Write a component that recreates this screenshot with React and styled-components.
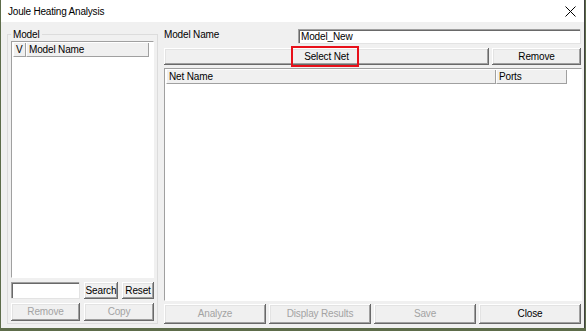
import React from "react";
import styled, { createGlobalStyle } from "styled-components";

const Global = createGlobalStyle`
	html, body {
		margin: 0;
		padding: 0;
		background: #5d6c4a;
		width: 586px;
		height: 331px;
		overflow: hidden;
	}
	* {
		box-sizing: border-box;
	}
`;

const Window = styled.div`
	width: 584px;
	height: 328px;
	margin-left: 1px;
	background: #f0f0f0;
	border-right: 1px solid #3f3f3f;
	display: flex;
	flex-direction: column;
	font-family: "Liberation Sans", Arial, sans-serif;
	font-size: 10px;
	letter-spacing: -0.15px;
	color: #000;
`;

const TitleBar = styled.div`
	height: 22px;
	background: #fff;
	display: flex;
	align-items: center;
	justify-content: space-between;
	padding: 0 8px 0 7px;
	font-size: 10px;
	letter-spacing: -0.2px;
`;

const Body = styled.div`
	flex: 1;
	display: flex;
	gap: 6px;
	padding: 6px 3px 4px 6px;
`;

const Group = styled.fieldset`
	width: 151px;
	margin: 0;
	padding: 0 3px 2px 3px;
	border: 1px solid #dcdcdc;
	display: flex;
	flex-direction: column;
	min-width: 0;
	legend {
		padding: 0 2px;
		margin-left: 0;
		line-height: 13px;
	}
`;

const List = styled.div`
	flex: 1;
	background: #fff;
	border-top: 1px solid #a0a0a0;
	border-left: 1px solid #a0a0a0;
	border-right: 1px solid #fff;
	border-bottom: 1px solid #fff;
	padding: 1px 0 0 1px;
	display: flex;
	flex-direction: column;
`;

const Header = styled.div`
	display: flex;
	height: 14px;
`;

const Col = styled.div`
	width: ${(p) => p.$w}px;
	background: #f0f0f0;
	border-right: 1px solid #a0a0a0;
	border-bottom: 1px solid #a0a0a0;
	border-left: 1px solid #fff;
	padding-left: 2px;
	line-height: 13px;
	white-space: nowrap;
`;

const Row = styled.div`
	display: flex;
	gap: ${(p) => p.$gap || 4}px;
	margin-top: ${(p) => p.$mt || 0}px;
	height: ${(p) => p.$h}px;
	align-items: stretch;
`;

const Input = styled.div`
	width: ${(p) => (p.$w ? p.$w + "px" : "auto")};
	flex: ${(p) => (p.$w ? "none" : 1)};
	background: #fff;
	box-shadow: inset 1px 1px #a0a0a0, inset 2px 2px #696969;
	border-right: 1px solid #e3e3e3;
	border-bottom: 1px solid #e3e3e3;
	padding: 1px 0 0 3px;
	line-height: 13px;
`;

const Button = styled.div`
	position: relative;
	width: ${(p) => (p.$w ? p.$w + "px" : "auto")};
	flex: ${(p) => (p.$w ? "none" : 1)};
	background: #f0f0f0;
	box-shadow: inset -1px -1px #696969, inset 1px 1px #fff,
		inset -2px -2px #a0a0a0, inset 2px 2px #e3e3e3;
	display: flex;
	align-items: center;
	justify-content: center;
	color: ${(p) => (p.$off ? "#a3a3a3" : "#000")};
	padding-bottom: 1px;
	white-space: nowrap;
`;

const Mark = styled.div`
	position: absolute;
	left: 127px;
	top: -2px;
	width: 68px;
	height: 21px;
	border: 2px solid #e8101a;
`;

const Right = styled.div`
	flex: 1;
	display: flex;
	flex-direction: column;
	padding-top: 1px;
`;

const Label = styled.div`
	width: 130px;
	line-height: 12px;
`;

const NetList = styled(List)`
	flex: 1;
	margin-top: 3px;
	margin-right: -1px;
`;

const Close = () => (
	<svg width="11" height="11" viewBox="0 0 11 11">
		<path d="M0.5 0.5L10.5 10.5M10.5 0.5L0.5 10.5" stroke="#000" strokeWidth="1" />
	</svg>
);

export default function App() {
	return (
		<>
			<Global />
			<Window>
				<TitleBar>
					<span>Joule Heating Analysis</span>
					<Close />
				</TitleBar>
				<Body>
					<Group>
						<legend>Model</legend>
						<List>
							<Header>
								<Col $w={13}>V</Col>
								<Col $w={123}>Model Name</Col>
							</Header>
						</List>
						<Row $mt={4} $h={17}>
							<Input $w={69} />
							<Button $w={34}>Search</Button>
							<Button $w={32}>Reset</Button>
						</Row>
						<Row $mt={4} $h={18}>
							<Button $w={69} $off>Remove</Button>
							<Button $off>Copy</Button>
						</Row>
					</Group>
					<Right>
						<Row $h={15} $gap={0}>
							<Label>Model Name</Label>
							<Input>Model_New</Input>
						</Row>
						<Row $mt={4} $h={17} $gap={3}>
							<Button $w={325}>
								Select Net
								<Mark />
							</Button>
							<Button>Remove</Button>
						</Row>
						<NetList>
							<Header>
								<Col $w={330}>Net Name</Col>
								<Col $w={71}>Ports</Col>
							</Header>
						</NetList>
						<Row $mt={3} $h={20} $gap={3}>
							<Button $off>Analyze</Button>
							<Button $off>Display Results</Button>
							<Button $off>Save</Button>
							<Button>Close</Button>
						</Row>
					</Right>
				</Body>
			</Window>
		</>
	);
}
